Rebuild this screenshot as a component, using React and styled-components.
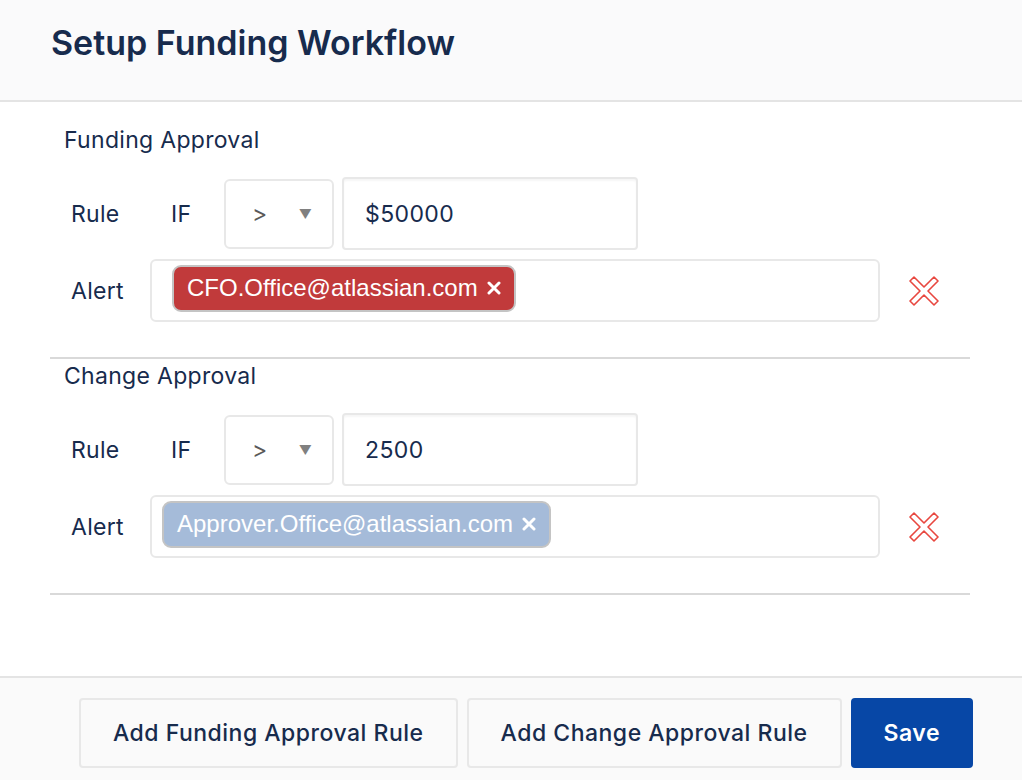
import React from 'react';
import styled, { createGlobalStyle } from 'styled-components';

const GlobalStyle = createGlobalStyle`
	* {
		box-sizing: border-box;
	}
	body {
		margin: 0;
		background: #ffffff;
		font-family: Inter, 'Noto Sans', sans-serif;
		color: #172b4d;
	}
`;

const Page = styled.div`
	width: 1022px;
	height: 780px;
	display: flex;
	flex-direction: column;
	background: #ffffff;
	overflow: hidden;
`;

const Header = styled.header`
	height: 102px;
	padding: 23px 0 0 51px;
	background: #fafafb;
	border-bottom: 2px solid #e4e4e4;
	h1 {
		margin: 0;
		font-size: 34px;
		font-weight: 600;
		line-height: 40px;
		color: #172b4d;
	}
`;

const Body = styled.main`
	flex: 1;
	padding: 22px 52px 0 50px;
`;

const Section = styled.section`
	padding: ${(p) => (p.first ? '0' : '1px')} 0 35px;
	border-bottom: 2px solid #d9d9d9;
`;

const SectionTitle = styled.h2`
	margin: 0 0 21px 14px;
	font-size: 23px;
	font-weight: 400;
	letter-spacing: 0.3px;
	line-height: 32px;
	color: #172b4d;
`;

const Row = styled.div`
	display: flex;
	align-items: center;
	margin-top: ${(p) => p.gap || 0}px;
`;

const Label = styled.span`
	width: ${(p) => p.width}px;
	padding-left: ${(p) => p.indent || 0}px;
	flex-shrink: 0;
	font-size: 23px;
	letter-spacing: 0.3px;
	color: #172b4d;
`;

const Select = styled.div`
	width: 110px;
	height: 70px;
	margin-right: 8px;
	display: flex;
	align-items: center;
	padding: 0 20px 0 26px;
	justify-content: space-between;
	border: 2px solid #e8e8e8;
	border-radius: 6px;
	font-size: 23px;
	color: #5a5a5a;
	.arrow {
		font-size: 13px;
		color: #808080;
	}
`;

const Input = styled.div`
	width: 296px;
	height: 73px;
	display: flex;
	align-items: center;
	padding-left: 21px;
	border: 2px solid #e8e8e8;
	border-radius: 4px;
	box-shadow: inset 0 2px 2px rgba(0, 0, 0, 0.04);
	font-size: 23px;
	letter-spacing: 0.4px;
	color: #172b4d;
`;

const TagBox = styled.div`
	width: 730px;
	height: 63px;
	display: flex;
	align-items: flex-start;
	padding: 4px 0 0 ${(p) => p.pad}px;
	border: 2px solid #e8e8e8;
	border-radius: 6px;
`;

const Tag = styled.span`
	height: 47px;
	display: inline-flex;
	align-items: center;
	gap: 9px;
	padding: 0 13px 2px 13px;
	background: ${(p) => p.color};
	border: 2px solid #c4c4c4;
	border-radius: 9px;
	font-family: 'Liberation Sans', Arial, sans-serif;
	font-size: 24px;
	color: #ffffff;
	svg {
		flex-shrink: 0;
	}
`;

const RemoveButton = styled.button`
	margin-left: 29px;
	padding: 0;
	width: 30px;
	height: 30px;
	border: none;
	background: none;
	display: flex;
	align-items: center;
	justify-content: center;
	cursor: pointer;
`;

const Footer = styled.footer`
	height: 104px;
	padding: 20px 49px 13px 0;
	background: #fafafa;
	border-top: 2px solid #e4e4e4;
	display: flex;
	justify-content: flex-end;
	gap: 9px;
`;

const Button = styled.button`
	height: 70px;
	padding: 0 ${(p) => (p.primary ? 31 : 32)}px;
	border-radius: 4px;
	border: 2px solid ${(p) => (p.primary ? '#0747a6' : '#e8e8e8')};
	background: ${(p) => (p.primary ? '#0747a6' : '#fafafa')};
	color: ${(p) => (p.primary ? '#ffffff' : '#172b4d')};
	font-family: Inter, 'Noto Sans', sans-serif;
	font-size: 23px;
	letter-spacing: 0.5px;
	font-weight: ${(p) => (p.primary ? 600 : 500)};
	cursor: pointer;
`;

const CrossIcon = () => (
	<svg width='30' height='30' viewBox='0 0 30 30'>
		<polygon
			points='1,5 5,1 15,11 25,1 29,5 19,15 29,25 25,29 15,19 5,29 1,25 11,15'
			fill='none'
			stroke='#e8473f'
			strokeWidth='1.6'
			strokeLinejoin='round'
		/>
	</svg>
);

const TagClose = () => (
	<svg width='14' height='14' viewBox='0 0 14 14'>
		<path d='M2 2 L12 12 M12 2 L2 12' stroke='#ffffff' strokeWidth='3' strokeLinecap='round' />
	</svg>
);

const ApprovalSection = ({ title, value, email, tagColor, tagPad, first }) => (
	<Section first={first}>
		<SectionTitle>{title}</SectionTitle>
		<Row>
			<Label width={121} indent={21}>Rule</Label>
			<Label width={53}>IF</Label>
			<Select>
				<span>&gt;</span>
				<span className='arrow'>▼</span>
			</Select>
			<Input>{value}</Input>
		</Row>
		<Row gap={9}>
			<Label width={100} indent={21}>Alert</Label>
			<TagBox pad={tagPad}>
				<Tag color={tagColor}>
					{email}
					<TagClose />
				</Tag>
			</TagBox>
			<RemoveButton aria-label='Remove rule'>
				<CrossIcon />
			</RemoveButton>
		</Row>
	</Section>
);

const App = () => {
	return (
		<Page>
			<GlobalStyle />
			<Header>
				<h1>Setup Funding Workflow</h1>
			</Header>
			<Body>
				<ApprovalSection
					first
					title='Funding Approval'
					value='$50000'
					email='CFO.Office@atlassian.com'
					tagColor='#c13a3b'
					tagPad={20}
				/>
				<ApprovalSection
					title='Change Approval'
					value='2500'
					email='Approver.Office@atlassian.com'
					tagColor='#a5bbd9'
					tagPad={10}
				/>
			</Body>
			<Footer>
				<Button>Add Funding Approval Rule</Button>
				<Button>Add Change Approval Rule</Button>
				<Button primary>Save</Button>
			</Footer>
		</Page>
	);
};

export default App;
